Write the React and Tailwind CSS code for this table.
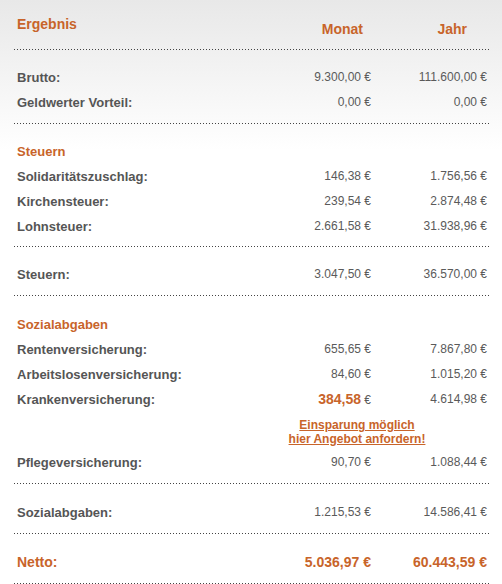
import React from "react";

const font = { fontFamily: '"Liberation Sans", Arial, sans-serif' };

function Line() {
  return <div className="h-px bg-[repeating-linear-gradient(to_right,#444_0px,#444_1px,transparent_1px,transparent_3px)]" />;
}

function Row({ label, m, y, big }) {
  return (
    <div className="grid grid-cols-[1fr_120px_116px] h-[25px] items-center pl-[3px] pr-[2px]">
      <div className={big ? "text-[14px] font-bold text-[#c8642a]" : "text-[13px] font-bold text-[#555]"}>{label}</div>
      <div className={big ? "text-right text-[14px] font-bold text-[#c8642a]" : "text-right text-[12px] text-[#5a5a5a]"}>{m}</div>
      <div className={big ? "text-right text-[14px] font-bold text-[#c8642a]" : "text-right text-[12px] text-[#5a5a5a]"}>{y}</div>
    </div>
  );
}

function Heading({ children }) {
  return (
    <div className="h-[25px] flex items-center pl-[3px] text-[13px] font-bold text-[#c8642a]">{children}</div>
  );
}

export default function App() {
  return (
    <div style={font} className="w-[502px] min-h-[584px] bg-[linear-gradient(180deg,#e8e8e8_0px,#ffffff_150px)] pl-[14px] pr-[13px] leading-[15px]">
      <div className="h-[49px] flex items-start pl-[3px] pr-[2px]">
        <div className="pt-[17px] text-[14px] font-bold text-[#c8642a] flex-1">Ergebnis</div>
        <div className="w-[120px] pt-[22px] pr-[8px] text-right text-[14px] font-bold text-[#c8642a]">Monat</div>
        <div className="w-[116px] pt-[22px] pr-[20px] text-right text-[14px] font-bold text-[#c8642a]">Jahr</div>
      </div>
      <Line />
      <div className="pt-[15px] pb-[8px]">
        <Row label="Brutto:" m="9.300,00 €" y="111.600,00 €" />
        <Row label="Geldwerter Vorteil:" m="0,00 €" y="0,00 €" />
      </div>
      <Line />
      <div className="pt-[15px] pb-[7px]">
        <Heading>Steuern</Heading>
        <Row label="Solidaritätszuschlag:" m="146,38 €" y="1.756,56 €" />
        <Row label="Kirchensteuer:" m="239,54 €" y="2.874,48 €" />
        <Row label="Lohnsteuer:" m="2.661,58 €" y="31.938,96 €" />
      </div>
      <Line />
      <div className="pt-[15px] pb-[8px]">
        <Row label="Steuern:" m="3.047,50 €" y="36.570,00 €" />
      </div>
      <Line />
      <div className="pt-[16px] pb-[8px]">
        <Heading>Sozialabgaben</Heading>
        <Row label="Rentenversicherung:" m="655,65 €" y="7.867,80 €" />
        <Row label="Arbeitslosenversicherung:" m="84,60 €" y="1.015,20 €" />
        <div className="grid grid-cols-[1fr_120px_116px] h-[25px] items-center pl-[3px] pr-[2px]">
          <div className="text-[13px] font-bold text-[#555]">Krankenversicherung:</div>
          <div className="text-right text-[12px] text-[#5a5a5a]">
            <span className="text-[14px] font-bold text-[#c8642a]">384,58</span> €
          </div>
          <div className="text-right text-[12px] text-[#5a5a5a]">4.614,98 €</div>
        </div>
        <div className="h-[38px] pt-[6px] flex justify-end pr-[62px]">
          <a href="#" className="block w-[140px] text-center text-[12px] leading-[14px] font-bold text-[#c8642a] underline">
            Einsparung möglich
            <br />
            hier Angebot anfordern!
          </a>
        </div>
        <Row label="Pflegeversicherung:" m="90,70 €" y="1.088,44 €" />
      </div>
      <Line />
      <div className="pt-[16px] pb-[8px]">
        <Row label="Sozialabgaben:" m="1.215,53 €" y="14.586,41 €" />
      </div>
      <Line />
      <div className="pt-[16px] pb-[8px]">
        <Row label="Netto:" m="5.036,97 €" y="60.443,59 €" big />
      </div>
      <Line />
    </div>
  );
}
